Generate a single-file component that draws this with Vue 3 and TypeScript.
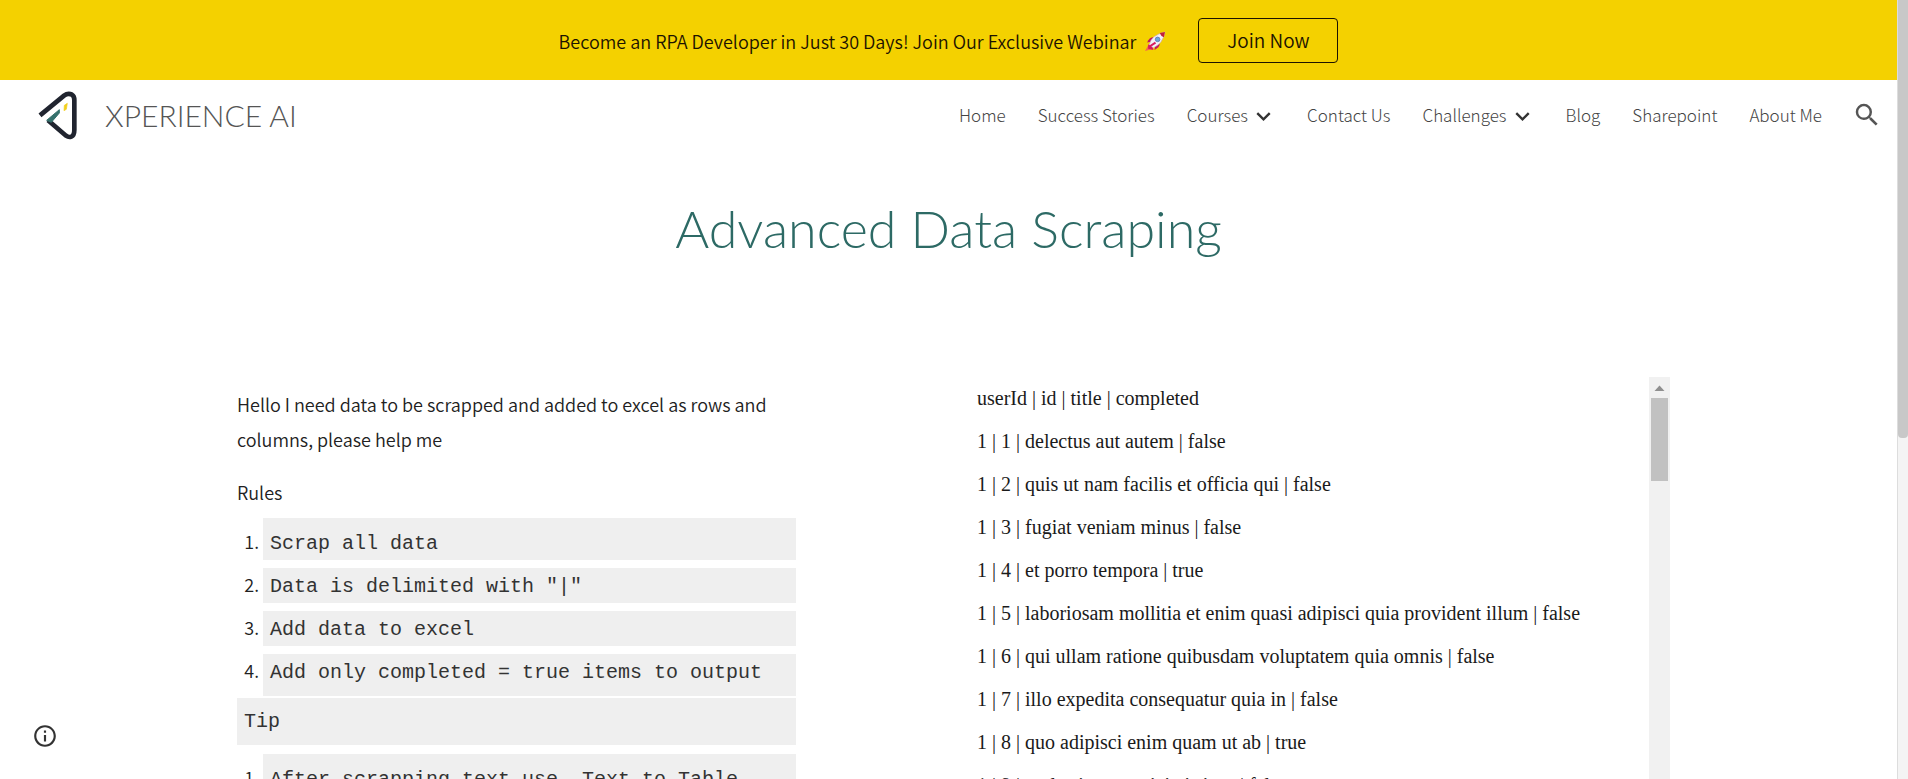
<script setup lang="ts">
interface NavItem {
  label: string
  menu?: boolean
}

interface Todo {
  id: number
  title: string
  completed: boolean
}

const navItems: NavItem[] = [
  { label: 'Home' },
  { label: 'Success Stories' },
  { label: 'Courses', menu: true },
  { label: 'Contact Us' },
  { label: 'Challenges', menu: true },
  { label: 'Blog' },
  { label: 'Sharepoint' },
  { label: 'About Me' },
]

const rules: string[] = [
  'Scrap all data',
  'Data is delimited with "|"',
  'Add data to excel',
  'Add only completed = true items to output',
]

const tips: string[] = ['After scrapping text use, Text to Table']

const todos: Todo[] = [
  { id: 1, title: 'delectus aut autem', completed: false },
  { id: 2, title: 'quis ut nam facilis et officia qui', completed: false },
  { id: 3, title: 'fugiat veniam minus', completed: false },
  { id: 4, title: 'et porro tempora', completed: true },
  { id: 5, title: 'laboriosam mollitia et enim quasi adipisci quia provident illum', completed: false },
  { id: 6, title: 'qui ullam ratione quibusdam voluptatem quia omnis', completed: false },
  { id: 7, title: 'illo expedita consequatur quia in', completed: false },
  { id: 8, title: 'quo adipisci enim quam ut ab', completed: true },
  { id: 9, title: 'molestiae perspiciatis ipsa', completed: false },
]
</script>

<template>
  <div class="page">
    <div class="site">
      <div class="banner">
        <p class="banner-text">
          Become an RPA Developer in Just 30 Days! Join Our Exclusive Webinar
          <svg class="rocket" viewBox="0 0 20 20" role="img" aria-label="Rocket">
            <path d="M8 6 Q4 6 2 11 L7 10Z" fill="#c2185b" />
            <path d="M14 12 Q14 16 9 18 L10 13Z" fill="#c2185b" />
            <path d="M4 12 L0 19 L8 17Z" fill="#f46a4e" />
            <path d="M3 13 Q7 12 8 18 L3 17Z" fill="#d81b60" />
            <path d="M4 13 Q6 4 19 1 Q17 12 8 16Z" fill="#f4f1f8" stroke="#c9a9c9" stroke-width="0.6" />
            <path d="M14 2 L19 1 L18 6 Q15 5 14 2Z" fill="#c2203a" />
            <circle cx="12" cy="8" r="2.2" fill="#6aa5dd" stroke="#596ea8" stroke-width="0.7" />
            <path d="M4 15 L10 11" stroke="#d81b60" stroke-width="2" />
          </svg>
        </p>
        <button class="join" type="button">Join Now</button>
      </div>

      <header class="header">
        <a class="brand" href="#">
          <svg class="logo" viewBox="54 30 120 150" aria-hidden="true">
            <path d="M60 106 L132 47 Q144 38 156 44 Q163 48 163 60 L163 150 Q163 166 154 170 Q146 173 138 167 L84 121" fill="none" stroke="#20242f" stroke-width="14" />
            <path d="M80 121 L118 89 L118 99 L94 127Z" fill="#34706c" stroke="#34706c" stroke-width="3" />
            <path d="M133 76 L142 70 L139 88 L132 92Z" fill="#f2cf1d" stroke="#f2cf1d" stroke-width="2" />
          </svg>
          <span class="brand-name">XPERIENCE AI</span>
        </a>
        <nav class="nav" aria-label="Main">
          <a v-for="item in navItems" :key="item.label" class="nav-link" href="#">
            {{ item.label }}
            <svg v-if="item.menu" class="chevron" viewBox="0 0 24 24" aria-hidden="true">
              <path d="M5.500 9.500 L12 16 L18.500 9.500" fill="none" stroke="#333" stroke-width="2.500" />
            </svg>
          </a>
          <button class="search" type="button" aria-label="Search">
            <svg viewBox="0 0 24 24" aria-hidden="true">
              <path fill="#555" d="M15.500 14h-.79l-.28-.27A6.471 6.471 0 0 0 16 9.500 6.500 6.500 0 1 0 9.500 16c1.610 0 3.090-.59 4.230-1.570l.27.28v.79l5 4.990L20.490 19l-4.990-5zm-6 0C7.010 14 5 11.990 5 9.500S7.010 5 9.500 5 14 7.010 14 9.500 11.990 14 9.500 14z" />
            </svg>
          </button>
        </nav>
      </header>

      <main class="main">
        <h1 class="title">Advanced Data Scraping</h1>
        <div class="columns">
          <section class="task">
            <p class="para">Hello I need data to be scrapped and added to excel as rows and columns, please help me</p>
            <p class="para">Rules</p>
            <ol class="list">
              <li v-for="rule in rules" :key="rule"><code>{{ rule }}</code></li>
            </ol>
            <p class="tip"><code>Tip</code></p>
            <ol class="list">
              <li v-for="tip in tips" :key="tip"><code>{{ tip }}</code></li>
            </ol>
          </section>
          <section class="embed">
            <div class="records">
              <p>userId | id | title | completed</p>
              <p v-for="todo in todos" :key="todo.id">1 | {{ todo.id }} | {{ todo.title }} | {{ todo.completed }}</p>
            </div>
            <div class="embed-bar" aria-hidden="true">
              <svg class="arrow" viewBox="0 0 21 21"><path d="M5.500 14 L10.500 8.500 L15.500 14Z" fill="#8f8f8f" /></svg>
              <div class="embed-thumb"></div>
            </div>
          </section>
        </div>
      </main>
    </div>

    <div class="page-bar" aria-hidden="true"><div class="page-thumb"></div></div>

    <button class="info" type="button" aria-label="Site information">
      <svg viewBox="0 0 24 24" aria-hidden="true">
        <path fill="#333" d="M11 17h2v-6h-2v6zm1-15C6.480 2 2 6.480 2 12s4.480 10 10 10 10-4.480 10-10S17.520 2 12 2zm0 18c-4.410 0-8-3.590-8-8s3.590-8 8-8 8 3.590 8 8-3.590 8-8 8zM11 9h2V7h-2v2z" />
      </svg>
    </button>
  </div>
</template>

<style>
body {
  margin: 0;
  background: #fff;
}
</style>

<style scoped>
.page {
  display: flex;
  height: 100vh;
  overflow: hidden;
  font-family: "Noto Sans CJK SC", "Open Sans", sans-serif;
  font-weight: 350;
  color: #212121;
}

.site {
  flex: 1;
  min-width: 0;
}

p,
h1,
ol {
  margin: 0;
}

button {
  font: inherit;
  color: inherit;
  background: none;
  border: 0;
  padding: 0;
  cursor: pointer;
}

.banner {
  display: flex;
  align-items: center;
  justify-content: center;
  gap: 32px;
  height: 80px;
  background: #f4d100;
  color: #1c1300;
}

.banner-text {
  display: flex;
  align-items: center;
  gap: 9px;
  padding-top: 2px;
  font-size: 18px;
  line-height: 28px;
}

.rocket {
  width: 21px;
  height: 21px;
}

.join {
  min-width: 140px;
  height: 45px;
  border: 1px solid #1c1300;
  border-radius: 4px;
  font-size: 19px;
  line-height: 28px;
}

.header {
  display: flex;
  align-items: center;
  justify-content: space-between;
  height: 70px;
  padding: 0 15px 0 38px;
}

.brand {
  display: flex;
  align-items: center;
  gap: 27px;
  color: #555;
  text-decoration: none;
}

.logo {
  width: 40px;
  height: 50px;
}

.brand-name {
  font-family: Lato, sans-serif;
  font-weight: 300;
  font-size: 30px;
  line-height: 36px;
}

.nav {
  display: flex;
  align-items: center;
  gap: 32px;
}

.nav-link {
  display: flex;
  align-items: center;
  gap: 4px;
  color: #444;
  font-weight: 300;
  font-size: 17px;
  line-height: 28px;
  text-decoration: none;
}

.chevron {
  width: 23px;
  height: 23px;
}

.search,
.search svg {
  display: block;
  width: 30px;
  height: 30px;
}

.search {
  margin-left: -2px;
}

.title {
  padding: 42px 0 0;
  color: #2d6a65;
  font-family: Lato, sans-serif;
  font-weight: 300;
  font-size: 52px;
  line-height: 72px;
  text-align: center;
}

.columns {
  display: grid;
  grid-template-columns: 559fr 696fr;
  column-gap: 178px;
  width: 76%;
  max-width: 1433px;
  margin: 113px auto 0;
  padding-left: 10px;
}

.task {
  padding-top: 10px;
}

.para {
  margin-bottom: 18px;
  font-size: 18px;
  line-height: 35px;
}

.list {
  display: flex;
  flex-direction: column;
  gap: 8px;
  padding-left: 26px;
  margin-top: -10px;
}

.list li,
.tip {
  background: #efefef;
  padding: 0 7px;
  font-size: 18px;
  line-height: 34px;
}

.list li {
  line-height: 32px;
}

.list li:first-child {
  padding-top: 7px;
}

.list li:last-child {
  padding-bottom: 7px;
}

.tip {
  margin: 2px 0 19px;
  padding: 7px 7px 6px;
}

code {
  display: block;
  color: #333;
  font-family: "Liberation Mono", monospace;
  font-size: 20px;
}

.embed {
  display: flex;
  justify-content: space-between;
}

.records {
  padding-top: 10px;
  padding-left: 3px;
  color: #1a1a1a;
  font-family: "Liberation Serif", serif;
  font-weight: 400;
  font-size: 20px;
  line-height: 23px;
}

.records p {
  margin-bottom: 20px;
}

.embed-bar {
  width: 21px;
  background: #f1f1f1;
}

.arrow {
  display: block;
  width: 21px;
  height: 21px;
}

.embed-thumb {
  height: 83px;
  margin: 0 2px;
  background: #c1c1c1;
}

.page-bar {
  width: 11px;
  background: #f4f4f4;
  border-left: 1px solid #ddd;
  box-sizing: border-box;
}

.page-thumb {
  height: 438px;
  background: #c8c8c8;
  border-radius: 0 0 4px 4px;
}

.info {
  position: fixed;
  left: 32px;
  bottom: 30px;
}

.info svg {
  display: block;
  width: 26px;
  height: 26px;
}
</style>
